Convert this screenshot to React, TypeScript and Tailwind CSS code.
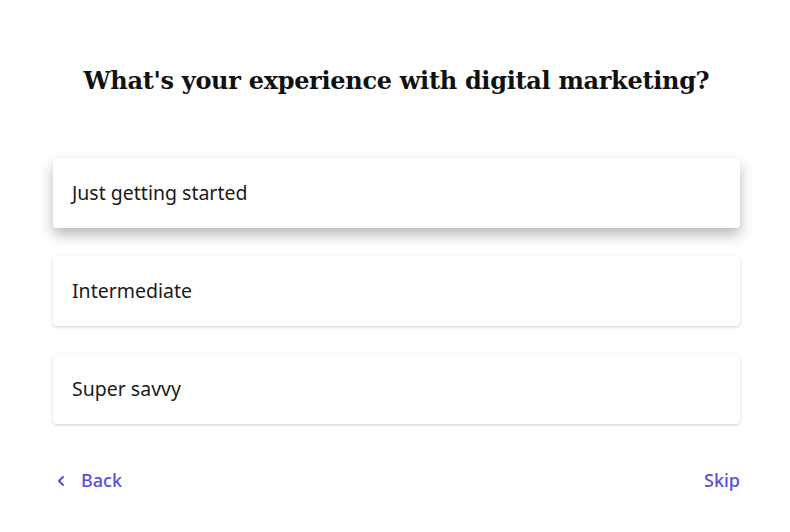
import { ChevronLeft } from 'lucide-react';

const OPTIONS = ['Just getting started', 'Intermediate', 'Super savvy'];

export default function App() {
  return (
    <div className="w-[790px] h-[532px] bg-white overflow-hidden">
      <div className="pl-[53px] pr-[50px] pt-[65px]">
        <h1 className="text-center text-[24px] leading-[32px] font-bold text-[#111] font-['DejaVu_Serif',serif] tracking-[-0.3px]">
          What's your experience with digital marketing?
        </h1>

        <div className="mt-[61px] flex flex-col gap-[28px]">
          {OPTIONS.map((opt, i) => (
            <button
              key={opt}
              className={`h-[70px] w-full rounded-[4px] bg-white text-left px-[19px] text-[19.5px] text-[#1a1a1a] font-['Noto_Sans',sans-serif] ${
                i === 0
                  ? 'shadow-[0_7px_14px_rgba(0,0,0,0.28)]'
                  : 'shadow-[0_1px_3px_rgba(0,0,0,0.2)]'
              }`}
            >
              {opt}
            </button>
          ))}
        </div>

        <div className="mt-[43px] flex items-center justify-between text-[18px] font-medium text-[#5a4de0] font-['Noto_Sans',sans-serif]">
          <button className="flex items-center gap-[12px]">
            <ChevronLeft size={16} strokeWidth={3} />
            <span>Back</span>
          </button>
          <button>Skip</button>
        </div>
      </div>
    </div>
  );
}
